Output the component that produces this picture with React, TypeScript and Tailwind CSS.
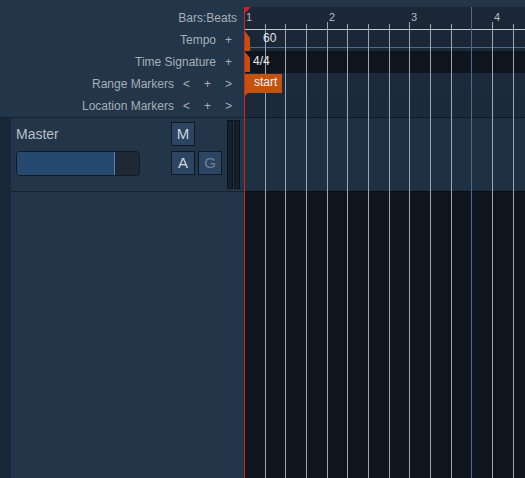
import React from "react";

const RULERS = [
  { label: "Bars:Beats", buttons: [] as string[] },
  { label: "Tempo", buttons: ["+"] },
  { label: "Time Signature", buttons: ["+"] },
  { label: "Range Markers", buttons: ["<", "+", ">"] },
  { label: "Location Markers", buttons: ["<", "+", ">"] },
];

// beat offsets from the canvas origin, every 4th is a bar
const BEATS = [21, 41, 62, 83, 103, 124, 145, 165, 186, 207, 227, 248, 269];
const BARS = [
  { n: "1", x: 0 },
  { n: "2", x: 83 },
  { n: "3", x: 165 },
  { n: "4", x: 248 },
];

function RulerLabels() {
  return (
    <div className="flex flex-col">
      {RULERS.map((r) => (
        <div key={r.label} className="flex h-[22px] items-center justify-end pb-[1px] pr-[5px] text-[12px] text-[#a7afb7]">
          <span className="mr-[2px]">{r.label}</span>
          {r.buttons.map((b, i) => (
            <span key={i} className="w-[21px] text-center">
              {b}
            </span>
          ))}
        </div>
      ))}
    </div>
  );
}

function TrackHeader() {
  return (
    <div className="flex h-[73px]">
      <div className="w-[160px] pl-[5px] pt-[8px]">
        <div className="text-[14px] leading-[16px] text-[#b8bfc6]">Master</div>
        <div className="mt-[9px] flex h-[25px] w-[124px] overflow-hidden rounded-[4px] border border-[#121b25] bg-[#1f2934]">
          <div className="h-full w-[98px] border-r border-[#4f82b8] bg-[#25496f]" />
        </div>
      </div>
      <div className="w-[51px] pt-[4px]">
        <div className="flex h-[24px] w-[24px] items-center justify-center border border-[#101923] bg-[#2b4562] text-[15px] text-[#cdd4da]">
          M
        </div>
        <div className="mt-[5px] flex gap-[3px]">
          <div className="flex h-[24px] w-[24px] items-center justify-center border border-[#101923] bg-[#2b4562] text-[15px] text-[#cdd4da]">
            A
          </div>
          <div className="flex h-[24px] w-[24px] items-center justify-center border border-[#101923] bg-[#2b4562] text-[15px] text-[#6e8295]">
            G
          </div>
        </div>
      </div>
      <div className="ml-[5px] flex gap-px pt-[2px]">
        <div className="h-[69px] w-[6px] border border-[#0c131a] bg-[#14202b]" />
        <div className="h-[69px] w-[6px] border border-[#0c131a] bg-[#14202b]" />
      </div>
    </div>
  );
}

function Canvas() {
  return (
    <div className="relative flex flex-1 flex-col">
      <div className="h-[7px]" />
      <div className="h-[22px] bg-[#1b2737]" />
      <div className="h-px bg-[#c3c9cf]" />
      <div className="h-[17px] bg-[#1b2737]" />
      <div className="h-px bg-[#4d6d93]" />
      <div className="h-[3px] bg-[#1b2737]" />
      <div className="h-[22px] bg-[#0e151d]" />
      <div className="h-[22px] bg-[#1c2a3b]" />
      <div className="h-[22px] bg-[#1b2939]" />
      <div className="h-px bg-[#111a24]" />
      <div className="h-[73px] bg-[#1e3042]" />
      <div className="h-px bg-[#070c11]" />
      <div className="flex-1 bg-[#0e151d]" />

      {/* grid */}
      {BEATS.map((x, i) => (
        <div
          key={x}
          className={i % 4 === 3 ? "absolute bottom-0 top-[22px] w-px bg-[#9ba7b3]" : "absolute bottom-0 top-[24px] w-px bg-[#9ba7b3]"}
          style={{ left: x }}
        />
      ))}
      <div className="absolute bottom-0 top-[7px] w-px bg-[#4b6b91]" style={{ left: 227 }} />

      {BARS.map((b) => (
        <span key={b.n} className="absolute top-[12px] text-[11px] leading-none text-[#b3bbc3]" style={{ left: b.x + 2 }}>
          {b.n}
        </span>
      ))}

      {/* tempo marker */}
      <svg className="absolute left-0 top-[30px]" width="7" height="21" viewBox="0 0 7 21">
        <polygon points="0,0 6,8 6,21 0,21" fill="#c2510f" />
      </svg>
      <span className="absolute left-[19px] top-[32px] text-[12px] leading-none text-[#e2e6ea]">60</span>

      {/* meter marker */}
      <svg className="absolute left-0 top-[51px]" width="7" height="22" viewBox="0 0 7 22">
        <polygon points="0,0 6,7 6,21 0,21" fill="#c2510f" />
      </svg>
      <span className="absolute left-[9px] top-[55px] text-[12px] leading-none text-[#e8ecef]">4/4</span>

      {/* start marker */}
      <div className="absolute left-px top-[74px] h-[19px] w-[37px] bg-[#c4520f] pl-[9px] pt-[2px] text-[12px] leading-none text-[#f2f2f2]">
        start
      </div>
      <svg className="absolute left-px top-[93px]" width="3" height="3" viewBox="0 0 3 3">
        <polygon points="0,0 3,0 0,3" fill="#c4520f" />
      </svg>

      {/* playhead */}
      <div className="absolute bottom-0 left-0 top-[7px] w-px bg-[#d42222]" />
      <svg className="absolute left-0 top-[7px]" width="8" height="7" viewBox="0 0 8 7">
        <polygon points="0,0 7,0 0,7" fill="#c92626" />
      </svg>
    </div>
  );
}

export default function App() {
  return (
    <div className="flex h-[478px] w-[525px] overflow-hidden bg-[#233549] font-['Liberation_Sans',Arial,sans-serif]">
      <div className="flex w-[244px] flex-col">
        <div className="h-[7px]" />
        <RulerLabels />
        <div className="h-px bg-[#17222d]" />
        <div className="flex flex-1">
          <div className="w-[11px] bg-[#1a2736]" />
          <div className="flex flex-1 flex-col">
            <TrackHeader />
            <div className="h-px bg-[#17222d]" />
          </div>
        </div>
      </div>
      <Canvas />
    </div>
  );
}
